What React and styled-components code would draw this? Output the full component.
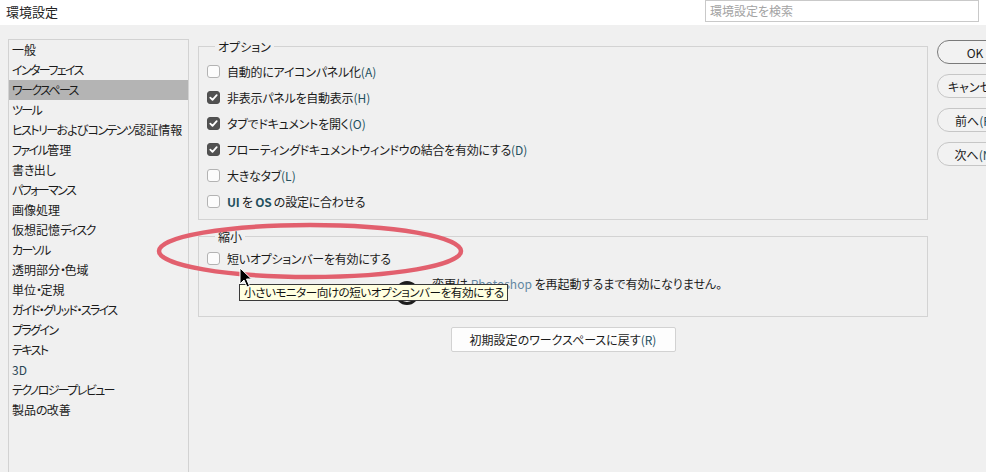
import React from 'react';
import styled, { createGlobalStyle } from 'styled-components';

const categories = [
  '一般',
  'インターフェイス',
  'ワークスペース',
  'ツール',
  'ヒストリーおよびコンテンツ認証情報',
  'ファイル管理',
  '書き出し',
  'パフォーマンス',
  '画像処理',
  '仮想記憶ディスク',
  'カーソル',
  '透明部分・色域',
  '単位・定規',
  'ガイド・グリッド・スライス',
  'プラグイン',
  'テキスト',
  '3D',
  'テクノロジープレビュー',
  '製品の改善',
];

const options = [
  { label: '自動的にアイコンパネル化', key: 'A', checked: false },
  { label: '非表示パネルを自動表示', key: 'H', checked: true },
  { label: 'タブでドキュメントを開く', key: 'O', checked: true },
  { label: 'フローティングドキュメントウィンドウの結合を有効にする', key: 'D', checked: true },
  { label: '大きなタブ', key: 'L', checked: false },
];

function NarrowKana({ text }) {
  const parts = text.split(/([\u30A0-\u30FF・ー]+|[\u3040-\u309F]+)/).filter(Boolean);
  return parts.map((p, i) => {
    if (/^[\u30A0-\u30FF・ー]+$/.test(p)) return <Kata key={i}>{p}</Kata>;
    if (/^[\u3040-\u309F]+$/.test(p)) return <Hira key={i}>{p}</Hira>;
    return <span key={i}>{p}</span>;
  });
}

export default function App() {
  return (
    <Window>
      <GlobalStyle />
      <Header>
        <Title>環境設定</Title>
        <SearchBox>環境設定を検索</SearchBox>
      </Header>
      <Body>
        <CategoryList>
          {categories.map((c, i) => (
            <CategoryItem key={c} $selected={i === 2} $latin={c === '3D'}>
              <NarrowKana text={c} />
            </CategoryItem>
          ))}
        </CategoryList>
        <Main>
          <Group $pad="11px 8px 5px">
            <Legend>オプション</Legend>
            {options.map((o) => (
              <Row key={o.key}>
                <Check $checked={o.checked}>{o.checked && <CheckMark />}</Check>
                <span>{o.label}<Accel>({o.key})</Accel></span>
              </Row>
            ))}
            <Row>
              <Check />
              <span><Latin>UI</Latin> を <Latin>OS</Latin> の設定に合わせる</span>
            </Row>
          </Group>
          <Group $pad="8px 8px 19px" $gap="16px">
            <Legend>縮小</Legend>
            <Row>
              <Check />
              <span>短いオプションバーを有効にする</span>
            </Row>
            <Note>
              変更は <Product>Photoshop</Product> を再起動するまで有効になりません。
            </Note>
          </Group>
          <ResetButton>初期設定のワークスペースに戻す<Accel>(R)</Accel></ResetButton>
        </Main>
        <SideButtons>
          <PillButton $default>OK</PillButton>
          <PillButton>キャンセル</PillButton>
          <PillButton>前へ<Accel>(P)</Accel></PillButton>
          <PillButton>次へ<Accel>(N)</Accel></PillButton>
        </SideButtons>
      </Body>

      <Annotation width="330" height="80" viewBox="0 0 330 80">
        <ellipse cx="160" cy="36" rx="151" ry="26" fill="none" stroke="#e2606e" strokeWidth="4.5" />
      </Annotation>
      <ClickRing width="26" height="30" viewBox="0 0 26 30">
        <circle cx="13" cy="14" r="10.5" fill="none" stroke="#1c1c1c" strokeWidth="3" />
      </ClickRing>
      <Tooltip>小さいモニター向けの短いオプションバーを有効にする</Tooltip>
      <Cursor width="14" height="22" viewBox="0 0 14 22">
        <path d="M1 1 L1 17 L5 13 L8 20 L10.5 19 L7.5 12 L12.5 12 Z" fill="#000" stroke="#fff" strokeWidth="1" strokeLinejoin="round" />
      </Cursor>
    </Window>
  );
}

function CheckMark() {
  return (
    <svg width="11" height="11" viewBox="0 0 11 11">
      <path d="M2.3 5.6 L4.5 7.8 L8.7 3.2" fill="none" stroke="#fff" strokeWidth="1.8" strokeLinecap="round" strokeLinejoin="round" />
    </svg>
  );
}

const GlobalStyle = createGlobalStyle`
  html, body {
    margin: 0;
    padding: 0;
    background: #f0f0f0;
    overflow: hidden;
  }
  body {
    font-family: "Noto Sans CJK JP", "Noto Sans", sans-serif;
    font-size: 12px;
    color: #1b1b1b;
    font-feature-settings: "palt";
  }
`;

const Window = styled.div`
  position: relative;
  width: 986px;
  height: 472px;
  overflow: hidden;
  background: #f0f0f0;
`;

const Header = styled.div`
  height: 25px;
  background: #ffffff;
  display: flex;
  justify-content: space-between;
  align-items: flex-start;
  padding: 0 7px 0 6px;
  box-sizing: border-box;
`;

const Title = styled.div`
  font-size: 13px;
  line-height: 24px;
  color: #222;
`;

const SearchBox = styled.div`
  width: 274px;
  height: 22px;
  box-sizing: border-box;
  border: 1px solid #c9c9c9;
  background: #fff;
  color: #a3a3a3;
  padding-left: 4px;
  line-height: 20px;
`;

const Body = styled.div`
  display: flex;
  align-items: flex-start;
  padding: 14px 0 0 8px;
  gap: 9px;
`;

const CategoryList = styled.div`
  width: 181px;
  height: 480px;
  flex-shrink: 0;
  box-sizing: border-box;
  border: 1px solid #d2d2d2;
  background: #f0f0f0;
`;

const CategoryItem = styled.div`
  height: 20px;
  line-height: 20px;
  padding-left: 3px;
  white-space: nowrap;
  background: ${(p) => (p.$selected ? '#b4b4b4' : 'transparent')};
  color: ${(p) => (p.$latin ? '#2a4655' : '#1b1b1b')};
`;

const Kata = styled.span`
  letter-spacing: -1.6px;
`;

const Hira = styled.span`
  letter-spacing: -0.8px;
`;

const Main = styled.div`
  width: 730px;
  flex-shrink: 0;
  padding-top: 7px;
  display: flex;
  flex-direction: column;
`;

const Group = styled.div`
  position: relative;
  border: 1px solid #d3d3d3;
  padding: ${(p) => p.$pad};
  margin-top: ${(p) => p.$gap || '0'};
`;

const Legend = styled.span`
  position: absolute;
  top: -9px;
  left: 16px;
  padding: 0 3px;
  line-height: 17px;
  background: #f0f0f0;
`;

const Row = styled.div`
  height: 26px;
  display: flex;
  align-items: center;
  gap: 7px;
  white-space: nowrap;
  letter-spacing: -0.25px;
`;

const Check = styled.span`
  width: 13px;
  height: 13px;
  box-sizing: border-box;
  border-radius: 3px;
  border: 1px solid ${(p) => (p.$checked ? '#4f4f4f' : '#b3b3b3')};
  background: ${(p) => (p.$checked ? '#525252' : '#fcfcfc')};
  display: flex;
  align-items: center;
  justify-content: center;
  flex-shrink: 0;
`;

const Accel = styled.span`
  color: #23505e;
  letter-spacing: 0;
`;

const Latin = styled.span`
  color: #23505e;
  font-weight: 600;
`;

const Note = styled.div`
  height: 26px;
  line-height: 26px;
  padding-left: 225px;
  white-space: nowrap;
`;

const Product = styled.span`
  color: #6388a2;
`;

const ResetButton = styled.button`
  align-self: center;
  margin-top: 10px;
  width: 225px;
  height: 25px;
  background: #fdfdfd;
  border: 1px solid #d2d2d2;
  border-radius: 2px;
  font: inherit;
  color: #1b1b1b;
  padding: 0;
`;

const SideButtons = styled.div`
  display: flex;
  flex-direction: column;
  gap: 10px;
  padding-top: 1px;
  flex-shrink: 0;
`;

const PillButton = styled.button`
  width: 76px;
  height: 24px;
  border-radius: 12px;
  border: 1px solid ${(p) => (p.$default ? '#7a7a7a' : '#c6c6c6')};
  background: #f2f2f2;
  font: inherit;
  color: #1b1b1b;
  padding: 0;
  white-space: nowrap;
`;

const Annotation = styled.svg`
  position: absolute;
  left: 150px;
  top: 215px;
`;

const ClickRing = styled.svg`
  position: absolute;
  left: 394px;
  top: 279px;
`;

const Tooltip = styled.div`
  position: absolute;
  left: 239px;
  top: 284px;
  width: 269px;
  height: 17px;
  box-sizing: border-box;
  border: 1px solid #3a3a3a;
  background: #ffffe1;
  color: #111;
  padding-left: 4px;
  font-size: 11.6px;
  line-height: 15px;
  letter-spacing: -0.5px;
  white-space: nowrap;
  overflow: hidden;
`;

const Cursor = styled.svg`
  position: absolute;
  left: 239px;
  top: 267px;
`;
